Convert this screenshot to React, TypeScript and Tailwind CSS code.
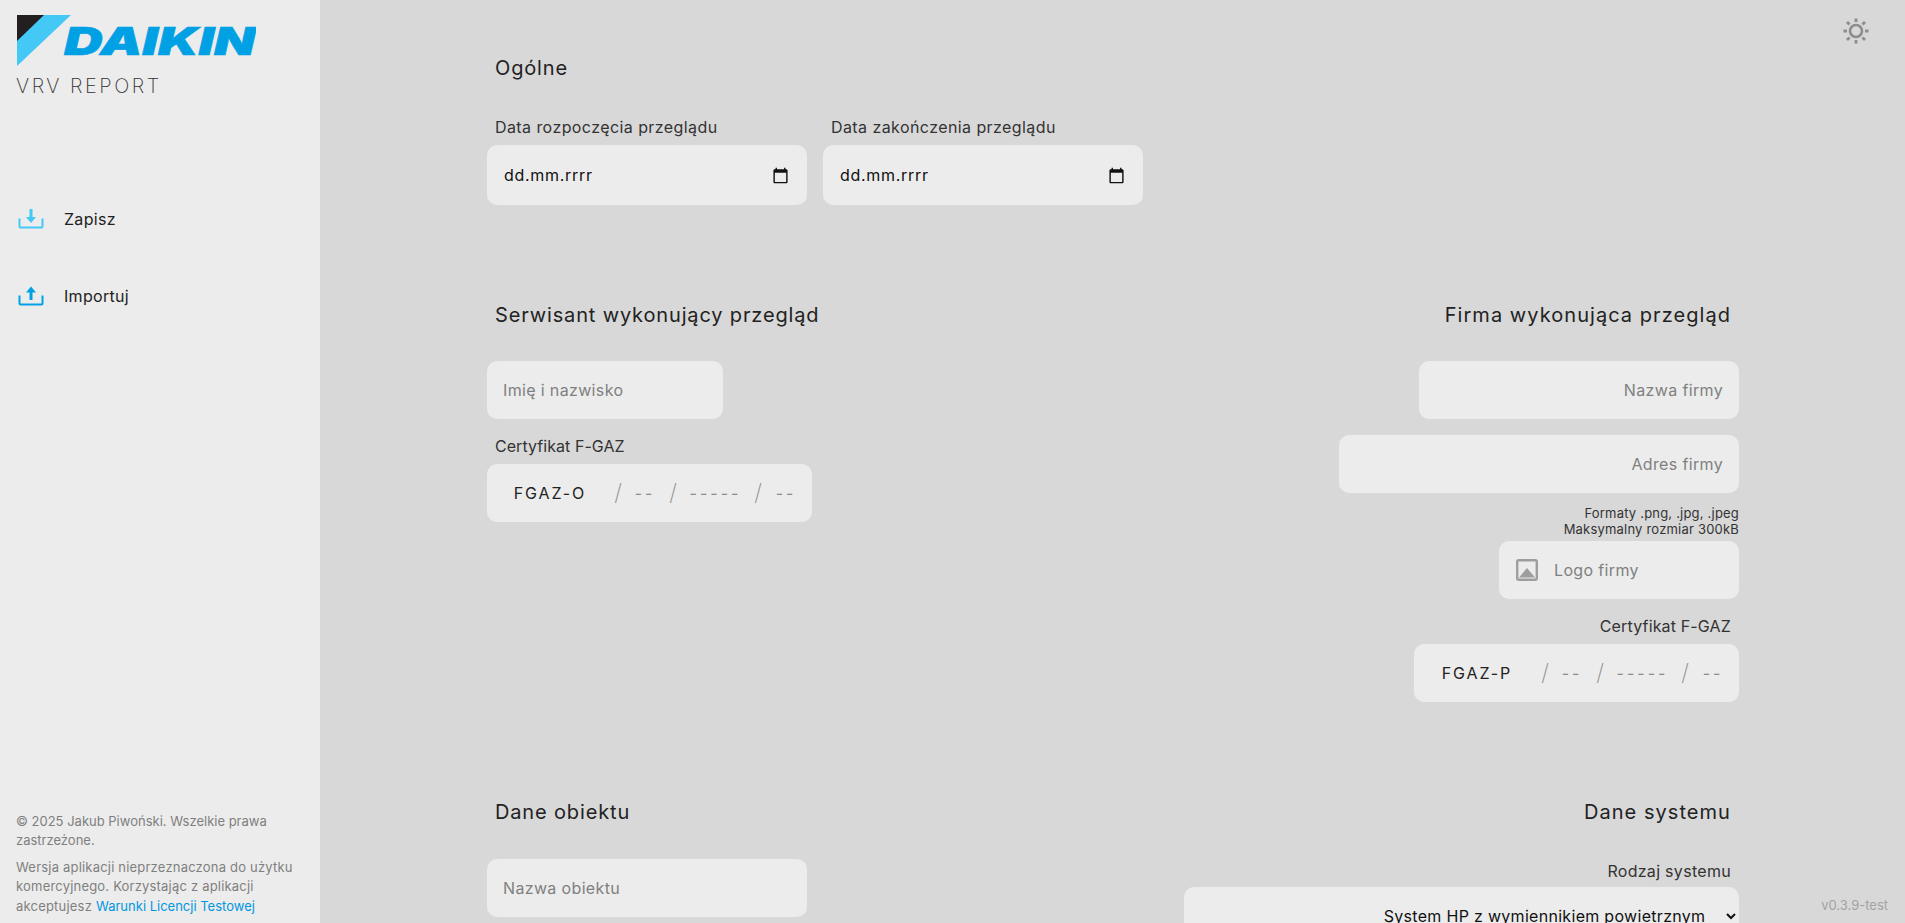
const sansClass = "font-['Inter','Noto_Sans',sans-serif]";

const DateField = ({ label }: { label: string }) => (
  <div className="flex flex-col">
    <label className="pl-2 text-[16px] leading-6 tracking-[0.42px] text-[#333]">{label}</label>
    <div className="mt-[6px] flex h-[60px] w-[320px] items-center justify-between rounded-[10px] bg-[#ececec] pl-[17px] pr-[18px] text-[16px] tracking-[0.7px] text-[#111]">
      <span>dd.mm.rrrr</span>
      <svg viewBox="0 0 24 24" className="h-[17px] w-[17px]" fill="#111">
        <path d="M20 3h-1V1h-2v2H7V1H5v2H4c-1.1 0-2 .9-2 2v16c0 1.1.9 2 2 2h16c1.1 0 2-.9 2-2V5c0-1.1-.9-2-2-2zm0 18H4V8h16v13z" />
      </svg>
    </div>
  </div>
);

const TextField = ({ placeholder, width, right }: { placeholder: string; width: string; right?: boolean }) => (
  <input
    type="text"
    placeholder={placeholder}
    className={`h-[58px] ${width} rounded-[10px] bg-[#ececec] px-4 text-[16px] tracking-[0.35px] text-[#111] outline-none placeholder:text-[#808080] ${right ? 'text-right' : 'text-left'}`}
  />
);

const Slash = ({ width }: { width: string }) => (
  <span className={`${width} text-center text-[23px] font-extralight leading-none text-[#8c8c8c]`}>/</span>
);

const Dashes = ({ width, text }: { width: string; text: string }) => (
  <span className={`${width} text-center text-[16px] tracking-[3px] text-[#8c8c8c]`}>{text}</span>
);

const FgazField = ({ prefix }: { prefix: string }) => (
  <div className="flex h-[58px] w-[325px] items-center rounded-[10px] bg-[#ececec] pr-1">
    <span className="w-[126px] text-center text-[16px] tracking-[1.9px] text-[#222]">{prefix}</span>
    <Slash width="w-[10px]" />
    <Dashes width="w-[44px]" text="--" />
    <Slash width="w-[12px]" />
    <Dashes width="w-[73px]" text="-----" />
    <Slash width="w-[12px]" />
    <Dashes width="w-[44px]" text="--" />
  </div>
);

const Heading = ({ children, right }: { children: string; right?: boolean }) => (
  <h2 className={`text-[20px] leading-7 text-[#222] ${right ? 'pr-2 text-right tracking-[1.05px]' : 'pl-2 tracking-[0.85px]'}`}>{children}</h2>
);

const NavItem = ({ label, icon }: { label: string; icon: React.ReactNode }) => (
  <button className="flex h-[77px] items-center gap-[20px] text-[16px] tracking-[0.3px] text-[#222]">
    {icon}
    <span>{label}</span>
  </button>
);

export default function App() {
  return (
    <div className={`flex h-screen overflow-hidden bg-[#d8d8d8] ${sansClass}`}>
      {/* Sidebar */}
      <aside className="flex h-full w-[320px] shrink-0 flex-col justify-between bg-[#ececec] px-4">
        <div>
          <svg viewBox="0 0 240 52" className="mt-[15px] block h-[52px] w-[240px]">
            <polygon points="1,0 55,0 1,51" fill="#44c8f5" />
            <polygon points="1,0 28,0 1,26" fill="#231f20" />
            <text
              x="48"
              y="40"
              textLength="191"
              lengthAdjust="spacingAndGlyphs"
              fontFamily="Inter, sans-serif"
              fontSize="38"
              fontWeight="900"
              fontStyle="italic"
              fill="#00a1e4"
              stroke="#00a1e4"
              strokeWidth="0.6"
            >
              DAIKIN
            </text>
          </svg>
          <div className="mt-[5px] text-[20px] font-[250] leading-7 tracking-[2.5px] text-[#333]">VRV REPORT</div>
          <nav className="mt-[80px] flex flex-col pl-[2px]">
            <NavItem
              label="Zapisz"
              icon={
                <svg viewBox="0 0 26 20" className="h-[20px] w-[26px]" fill="none">
                  <path d="M1.5 9.5v8a1 1 0 0 0 1 1h21a1 1 0 0 0 1-1v-8" stroke="#44c8f5" strokeWidth="2" />
                  <path d="M13 0v8" stroke="#44c8f5" strokeWidth="3" />
                  <path d="M8 8h10L13 14z" fill="#44c8f5" />
                </svg>
              }
            />
            <NavItem
              label="Importuj"
              icon={
                <svg viewBox="0 0 26 20" className="h-[20px] w-[26px]" fill="none">
                  <path d="M1.5 9.5v8a1 1 0 0 0 1 1h21a1 1 0 0 0 1-1v-8" stroke="#00a1e4" strokeWidth="2" />
                  <path d="M13 14V6" stroke="#00a1e4" strokeWidth="3" />
                  <path d="M8 6.5h10L13 0.5z" fill="#00a1e4" />
                </svg>
              }
            />
          </nav>
        </div>
        <footer className="pb-[7px] text-[13px] leading-[19.5px] text-[#7f7f7f]">
          <p>© 2025 Jakub Piwoński. Wszelkie prawa zastrzeżone.</p>
          <p className="mt-[7px] tracking-[0.2px]">
            Wersja aplikacji nieprzeznaczona do użytku komercyjnego. Korzystając z aplikacji
          </p>
          <div className="flex gap-1">
            <span className="tracking-[0.2px]">akceptujesz</span>
            <a className="text-[#0097e0]">Warunki Licencji Testowej</a>
          </div>
        </footer>
      </aside>

      {/* Form */}
      <main className="relative h-full flex-1 overflow-hidden pl-[167px] pr-[166px] pt-[54px]">
        <svg viewBox="0 0 28 28" className="absolute right-[35px] top-[17px] h-[28px] w-[28px]" fill="none" stroke="#8c8c8c">
          <circle cx="14" cy="14" r="6" strokeWidth="2.6" />
          <path strokeWidth="2.8" d="M14 1.5v3.5M14 23v3.5M1.5 14h3.5M23 14h3.5M5 5l2.5 2.5M20.5 20.5L23 23M5 23l2.5-2.5M20.5 7.5L23 5" />
        </svg>
        <span className="absolute bottom-[8px] right-[17px] text-[13px] text-[#a3a3a3]">v0.3.9-test</span>

        <section>
          <Heading>Ogólne</Heading>
          <div className="mt-[33px] flex gap-4">
            <DateField label="Data rozpoczęcia przeglądu" />
            <DateField label="Data zakończenia przeglądu" />
          </div>
        </section>

        <section className="mt-[96px] flex justify-between">
          <div className="flex flex-col items-start">
            <Heading>Serwisant wykonujący przegląd</Heading>
            <div className="mt-8">
              <TextField placeholder="Imię i nazwisko" width="w-[236px]" />
            </div>
            <label className="mt-[15px] pl-2 text-[16px] leading-6 tracking-[0.05px] text-[#333]">Certyfikat F-GAZ</label>
            <div className="mt-[6px]">
              <FgazField prefix="FGAZ-O" />
            </div>
          </div>
          <div className="flex flex-col items-end">
            <Heading right>Firma wykonująca przegląd</Heading>
            <div className="mt-8 flex flex-col items-end gap-4">
              <TextField placeholder="Nazwa firmy" width="w-[320px]" right />
              <TextField placeholder="Adres firmy" width="w-[400px]" right />
            </div>
            <p className="mt-3 text-right text-[13px] leading-4 tracking-[0.2px] text-[#333]">
              Formaty .png, .jpg, .jpeg
              <br />
              Maksymalny rozmiar 300kB
            </p>
            <div className="mt-1 flex h-[58px] w-[240px] items-center gap-[16px] rounded-[10px] bg-[#ececec] pl-[17px] text-[16px] tracking-[0.35px] text-[#808080]">
              <svg viewBox="0 0 22 22" className="h-[22px] w-[22px]">
                <rect x="1.2" y="1.2" width="19.6" height="19.6" rx="1.5" fill="none" stroke="#9e9e9e" strokeWidth="2.4" />
                <path d="M3 18.5L11 9l8 9.5z" fill="#9e9e9e" />
              </svg>
              <span>Logo firmy</span>
            </div>
            <label className="mt-[15px] pr-2 text-[16px] leading-6 tracking-[0.15px] text-[#333]">Certyfikat F-GAZ</label>
            <div className="mt-[6px]">
              <FgazField prefix="FGAZ-P" />
            </div>
          </div>
        </section>

        <section className="mt-[96px] flex justify-between">
          <div className="flex flex-col items-start">
            <Heading>Dane obiektu</Heading>
            <div className="mt-[33px]">
              <TextField placeholder="Nazwa obiektu" width="w-[320px]" />
            </div>
          </div>
          <div className="flex flex-col items-end">
            <Heading right>Dane systemu</Heading>
            <label className="mt-[33px] pr-2 text-[16px] leading-6 tracking-[0.3px] text-[#333]">Rodzaj systemu</label>
            <select className="mt-1 h-[58px] w-[555px] rounded-[10px] bg-[#ececec] px-2 text-right text-[16px] tracking-[0.3px] text-[#111] outline-none">
              <option>{'System HP z wymiennikiem powietrznym\u00a0\u00a0'}</option>
            </select>
          </div>
        </section>
      </main>
    </div>
  );
}
